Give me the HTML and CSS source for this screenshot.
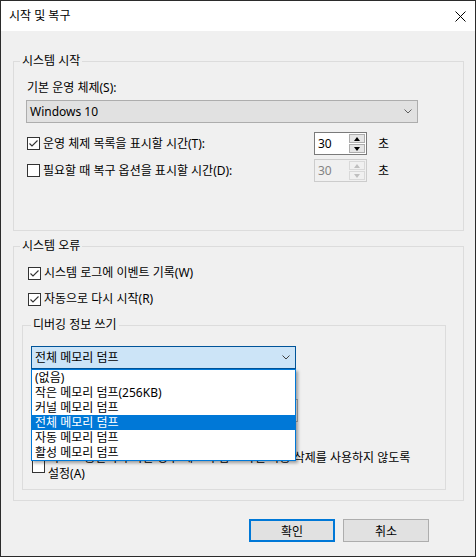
FILE: index.html
```html
<!DOCTYPE html>
<html lang="ko">
<head>
<meta charset="utf-8">
<title>시작 및 복구</title>
<link rel="stylesheet" href="styles.css">
</head>
<body>
<div class="window">
  <div class="titlebar">
    <span class="title">시작 및 복구</span>
    <svg class="close" width="11" height="11" viewBox="0 0 11 11"><path d="M0.5 0.5L10.5 10.5M10.5 0.5L0.5 10.5" stroke="#000" stroke-width="1" fill="none"/></svg>
  </div>
  <div class="content">
    <fieldset class="group g1">
      <legend>시스템 시작</legend>
      <div class="g1-inner">
        <div class="label">기본 운영 체제(S):</div>
        <div class="combo combo-os">
          <span class="combo-text">Windows 10</span>
          <svg class="chev" width="8" height="5" viewBox="0 0 8 5"><path d="M0.5 0.5L4 4L7.5 0.5" stroke="#5f5f5f" fill="none"/></svg>
        </div>
        <div class="timer-row first">
          <div class="check"><span class="box"><svg width="11" height="11" viewBox="0 0 11 11"><path d="M1.5 5.5L4 8L9.5 2.5" stroke="#333" stroke-width="1.1" fill="none"/></svg></span><span>운영 체제 목록을 표시할 시간(T):</span></div>
          <div class="spin">
            <span class="spin-val">30</span>
            <span class="spin-btns"><span class="sb"><span class="tri up"></span></span><span class="sb"><span class="tri down"></span></span></span>
          </div>
          <span class="unit">초</span>
        </div>
        <div class="timer-row">
          <div class="check"><span class="box"></span><span>필요할 때 복구 옵션을 표시할 시간(D):</span></div>
          <div class="spin disabled">
            <span class="spin-val">30</span>
            <span class="spin-btns"><span class="sb"><span class="tri up"></span></span><span class="sb"><span class="tri down"></span></span></span>
          </div>
          <span class="unit">초</span>
        </div>
      </div>
    </fieldset>

    <fieldset class="group g2">
      <legend>시스템 오류</legend>
      <div class="g2-inner">
        <div class="check top-check"><span class="box"><svg width="11" height="11" viewBox="0 0 11 11"><path d="M1.5 5.5L4 8L9.5 2.5" stroke="#333" stroke-width="1.1" fill="none"/></svg></span><span>시스템 로그에 이벤트 기록(W)</span></div>
        <div class="check top-check second"><span class="box"><svg width="11" height="11" viewBox="0 0 11 11"><path d="M1.5 5.5L4 8L9.5 2.5" stroke="#333" stroke-width="1.1" fill="none"/></svg></span><span>자동으로 다시 시작(R)</span></div>

        <fieldset class="group sub">
          <legend>디버깅 정보 쓰기</legend>
          <div class="sub-inner">
            <div class="combo-wrap">
              <div class="combo combo-dump">
                <span class="combo-text">전체 메모리 덤프</span>
                <svg class="chev" width="8" height="5" viewBox="0 0 8 5"><path d="M0.5 0.5L4 4L7.5 0.5" stroke="#404040" fill="none"/></svg>
              </div>
              <ul class="dropdown">
                <li>(없음)</li>
                <li>작은 메모리 덤프(256KB)</li>
                <li>커널 메모리 덤프</li>
                <li class="sel">전체 메모리 덤프</li>
                <li>자동 메모리 덤프</li>
                <li>활성 메모리 덤프</li>
              </ul>
            </div>
            <div class="label dump-label">덤프 파일:</div>
            <div class="textbox">%SystemRoot%\MEMORY.DMP</div>
            <div class="check overwrite"><span class="box"></span><span>기존 파일 덮어쓰기(O)</span></div>
            <div class="check multi"><span class="box"></span><span class="multi-text">디스크 공간이 부족한 경우 메모리 덤프 파일 자동 삭제를 사용하지 않도록<br>설정(A)</span></div>
          </div>
        </fieldset>
      </div>
    </fieldset>

    <div class="buttons">
      <button class="btn default">확인</button>
      <button class="btn">취소</button>
    </div>
  </div>
</div>
</body>
</html>
```

FILE: styles.css
```css
* { box-sizing: border-box; }
html, body { margin: 0; padding: 0; background: #f0f0f0; }
body {
  font-family: "Noto Sans", "Noto Sans CJK KR", sans-serif;
  font-size: 12px;
  color: #000;
}
.window {
  width: 476px;
  height: 557px;
  border: 1px solid #2b2b2b;
  background: #f0f0f0;
  display: flex;
  flex-direction: column;
}
.titlebar {
  height: 30px;
  background: #fff;
  display: flex;
  align-items: center;
  justify-content: space-between;
  padding: 0 9px 0 8px;
}
.title { line-height: 30px; }
.close { display: block; margin-top: 1px; }
.content {
  padding: 22px 11px 0 12px;
}
fieldset.group {
  margin: 0;
  padding: 0;
  border: 1px solid #dcdcdc;
  min-width: 0;
}
fieldset.group > legend {
  padding: 0 2px;
  margin-left: 6px;
  line-height: 16px;
  font-size: 12px;
}
.g1-inner { padding: 11px 0 48px 12px; }
.label { line-height: 16px; padding-left: 1px; }
.combo {
  height: 23px;
  border: 1px solid #adadad;
  background: #e1e1e1;
  display: flex;
  align-items: center;
  justify-content: space-between;
  padding: 0 5px 0 3px;
}
.combo-os { width: 392px; margin-top: 4px; }
.combo-text { line-height: 16px; }
.chev { display: block; }
.timer-row {
  display: flex;
  align-items: center;
  height: 23px;
  margin-top: 4px;
}
.timer-row.first { margin-top: 9px; }
.timer-row .check { width: 288px; }
.check {
  display: flex;
  align-items: center;
  line-height: 16px;
  padding-left: 1px;
}
.box {
  width: 13px;
  height: 13px;
  border: 1px solid #333;
  background: #fff;
  margin-right: 3px;
  flex: none;
  display: flex;
}
.box svg { display: block; }
.spin {
  width: 53px;
  height: 23px;
  border: 1px solid #7a7a7a;
  background: #fff;
  display: flex;
  justify-content: space-between;
}
.spin-val { line-height: 21px; padding-left: 3px; }
.spin-btns {
  width: 17px;
  display: flex;
  flex-direction: column;
  padding: 1px 1px 1px 0;
  gap: 1px;
  background: #fff;
}
.sb {
  flex: 1;
  border: 1px solid #adadad;
  background: #e5e5e5;
  display: flex;
  align-items: center;
  justify-content: center;
}
.tri { width: 0; height: 0; border-left: 3.5px solid transparent; border-right: 3.5px solid transparent; }
.tri.up { border-bottom: 4px solid #000; }
.tri.down { border-top: 4px solid #000; }
.spin.disabled { border-color: #cccccc; background: #f0f0f0; }
.spin.disabled .spin-val { color: #838383; }
.spin.disabled .spin-btns { background: #f0f0f0; }
.spin.disabled .sb { border-color: #d9d9d9; background: #f0f0f0; }
.spin.disabled .tri.up { border-bottom-color: #bfbfbf; }
.spin.disabled .tri.down { border-top-color: #bfbfbf; }
.unit { margin-left: 11px; line-height: 16px; }

fieldset.g2 { margin-top: 7px; }
.g2-inner { padding: 11px 0 10px 8px; }
.top-check { margin-left: 5px; }
.top-check.second { margin-top: 10px; }
fieldset.sub { width: 424px; margin-top: 10px; }
fieldset.sub > legend { margin-left: 8px; }
.sub-inner { padding: 13px 0 7px 8px; }
.combo-wrap { position: relative; width: 265px; }
.combo-dump {
  width: 265px;
  border-color: #005499;
  background: #cce4f7;
  padding: 0 5px 0 3px;
}
.dropdown {
  position: absolute;
  top: 23px;
  left: 0;
  width: 265px;
  margin: 0;
  padding: 0;
  list-style: none;
  background: #fff;
  border: 1px solid #0078d7;
  box-shadow: 2px 2px 3px rgba(0, 0, 0, 0.35);
  z-index: 5;
}
.dropdown li { line-height: 15px; height: 15px; padding-left: 3px; }
.dropdown li.sel { background: #0078d7; color: #fff; }
.dump-label { margin-top: 6px; padding-left: 0; }
.textbox {
  width: 267px;
  height: 23px;
  margin-top: 8px;
  border: 1px solid #adadad;
  background: #fff;
  padding-left: 3px;
  line-height: 21px;
}
.overwrite { margin-top: 8px; }
.multi { margin-top: 4px; }
.multi .box { margin-right: 3px; }
.multi-text { line-height: 16px; }

.buttons {
  display: flex;
  justify-content: flex-end;
  gap: 8px;
  margin-top: 18px;
  padding-right: 35px;
}
.btn {
  width: 86px;
  height: 23px;
  font-family: inherit;
  font-size: 12px;
  background: #e1e1e1;
  border: 1px solid #adadad;
  padding: 0;
  color: #000;
}
.btn.default { border: 2px solid #0078d7; }
```
